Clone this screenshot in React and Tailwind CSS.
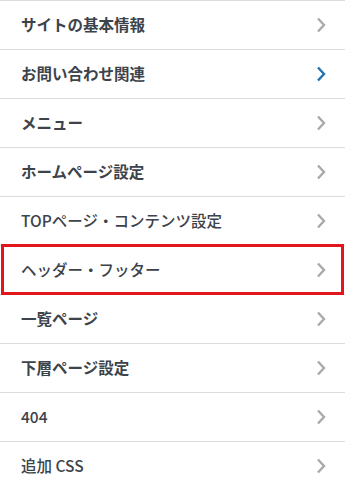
import React from "react";

const items = [
  { label: "サイトの基本情報", bold: true },
  { label: "お問い合わせ関連", bold: true, active: true },
  { label: "メニュー", bold: true },
  { label: "ホームページ設定", bold: true },
  { label: "TOPページ・コンテンツ設定", bold: false },
  { label: "ヘッダー・フッター", bold: false, marked: true },
  { label: "一覧ページ", bold: true },
  { label: "下層ページ設定", bold: true },
  { label: "404", bold: false },
  { label: "追加 CSS", bold: false },
];

function Chevron({ active }) {
  return (
    <svg width="11" height="16" viewBox="0 0 11 16" fill="none">
      <path
        d="M2 1.5 L8 8 L2 14.5"
        stroke={active ? "#2271b1" : "#a7aaad"}
        strokeWidth="2.4"
      />
    </svg>
  );
}

export default function App() {
  return (
    <div className="w-[345px] h-[485px] overflow-hidden bg-white font-['Noto_Sans_CJK_JP','Noto_Sans',sans-serif] text-[#3c434a]">
      <ul className="border-t border-[#dcdcde]">
        {items.map((item) => (
          <li
            key={item.label}
            className="relative flex h-[49px] items-center justify-between border-b border-[#dcdcde] pl-[21px] pr-[18px]"
          >
            <span className={`text-[15.5px] ${item.bold ? "font-bold" : "font-medium"}`}>
              {item.label}
            </span>
            <Chevron active={item.active} />
            {item.marked && (
              <div className="absolute -top-[2px] left-[1px] right-[1px] -bottom-[1px] border-[3px] border-[#e0161b]" />
            )}
          </li>
        ))}
      </ul>
    </div>
  );
}
